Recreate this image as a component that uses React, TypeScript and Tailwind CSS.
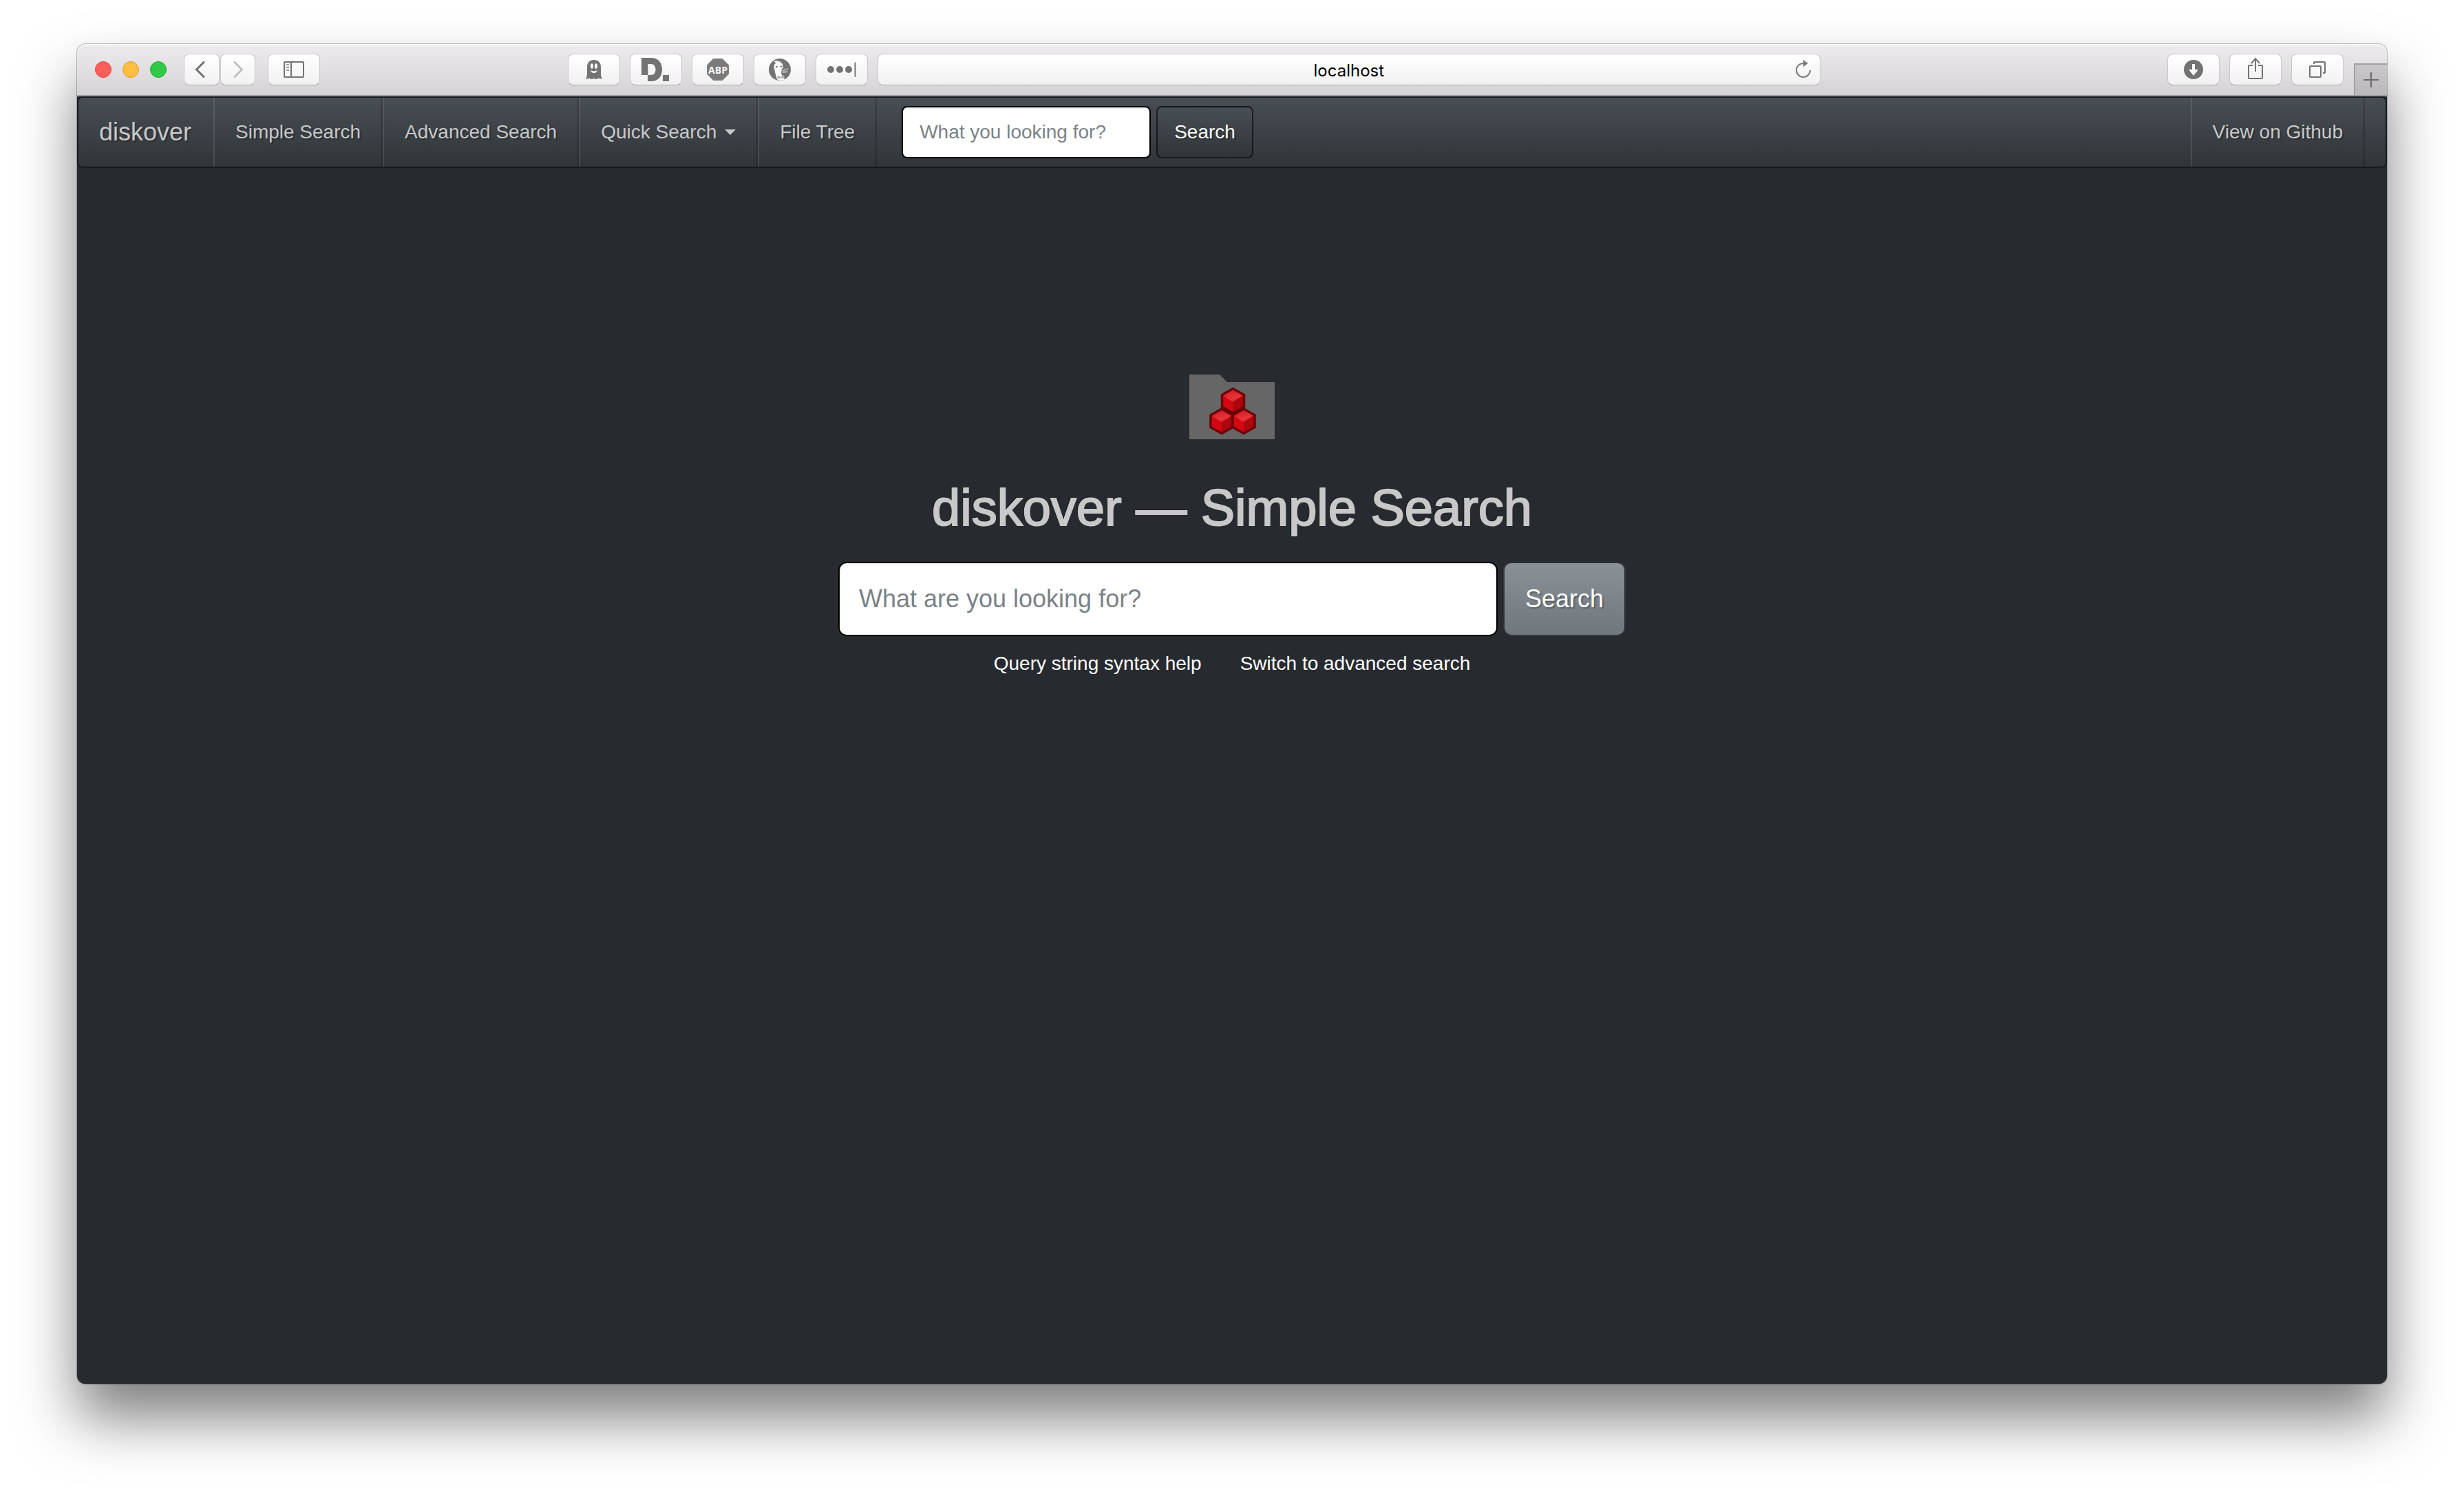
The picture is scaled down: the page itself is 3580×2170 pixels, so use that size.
import React from "react";

const toolButton =
  "flex h-[46px] items-center justify-center rounded-lg border border-[#c9c7ca] border-b-[#a9a7aa] bg-linear-to-b from-white to-[#f1f1f1] text-[#737373]";

const navItem =
  "flex items-center border-l-2 border-l-white/10 border-r-2 border-r-black/20 px-[30px]";

function ToolButton({
  label,
  width = "w-[76px]",
  children,
}: {
  label: string;
  width?: string;
  children: React.ReactNode;
}) {
  return (
    <button type="button" aria-label={label} className={`${toolButton} ${width}`}>
      {children}
    </button>
  );
}

function GhostIcon() {
  return (
    <svg width="24" height="28" viewBox="0 0 24 28" fill="currentColor">
      <path d="M12 0C6 0 2 4 2 10v10c0 3-.5 5-2 7 2 .8 4 .5 5.500-.8C7 28.400 9.500 28.400 12 27c2.500 1.400 5 1.400 6.500-.8 1.500 1.300 3.500 1.600 5.500.8-1.500-2-2-4-2-7V10C22 4 18 0 12 0Z" />
      <ellipse cx="9" cy="9" rx="2" ry="3.800" fill="#fafafa" />
      <ellipse cx="15" cy="9" rx="2" ry="3.800" fill="#fafafa" />
      <path d="M7 14.800c2.500 2.200 7.500 2.200 10 0-.6 2.800-2.500 4.200-5 4.200s-4.400-1.400-5-4.200Z" fill="#fafafa" />
    </svg>
  );
}

function DisconnectIcon() {
  return (
    <svg width="42" height="34" viewBox="0 0 42 34" fill="currentColor">
      <path d="M0 0h14c10.500 0 16 7 16 17s-5.500 17-16 17H9V25h5c4 0 6.500-3 6.500-8S18 9 14 9H9.500v16H0Z" />
      <path d="M31 25h9v9h-9z" />
    </svg>
  );
}

function AbpIcon() {
  return (
    <svg width="32" height="32" viewBox="0 0 32 32">
      <path d="M9.400 0h13.200L32 9.400v13.200L22.600 32H9.400L0 22.600V9.400Z" fill="#7b7b7b" />
      <text
        x="16"
        y="21.500"
        textAnchor="middle"
        fontFamily="'Open Sans', sans-serif"
        fontWeight="700"
        fontSize="14"
        fill="#fafafa"
      >
        ABP
      </text>
    </svg>
  );
}

function DuckIcon() {
  return (
    <svg width="32" height="32" viewBox="0 0 32 32">
      <circle cx="16" cy="16" r="16" fill="#737373" />
      <path d="M7.500 4.500C9 3.500 10.500 3 12 3.500c5 0 8.500 3.500 8.800 9l-2.300 4-.5 4.500 1.500 4 3.500 5.500-6 1.500-5-1.500C10 24 8.500 18 7.500 13c-.5-3 .5-5 3-6.500Z" fill="#fafafa" />
      <circle cx="11.500" cy="12" r="1.300" fill="#737373" />
      <circle cx="18" cy="11.500" r="1.200" fill="#737373" />
      <path d="M18 17.500c3-2.500 7-3 11-3 .5 1.500-3 2.800-6 3.300 2 .5 4 .5 5.500.5-1.500 3-6.500 3.500-10 2.200Z" fill="#a6a6a6" />
      <path d="M12 25l5 1.500 5-2.500 1 5-5-.8-5 2Z" fill="#b5b5b5" />
    </svg>
  );
}

function PasswordIcon() {
  return (
    <svg width="42" height="22" viewBox="0 0 42 22" fill="currentColor">
      <circle cx="5" cy="11" r="5" />
      <circle cx="18" cy="11" r="5" />
      <circle cx="31" cy="11" r="5" />
      <path d="M39.500 0.500h2v21h-2z" />
    </svg>
  );
}

function Logo() {
  const cubes = [
    [63.500, 38],
    [47, 67.500],
    [79, 67.500],
  ];
  return (
    <svg width="124" height="94" viewBox="0 0 124 94" role="img" aria-label="diskover logo">
      <defs>
        <linearGradient id="cube-top" x1="0.300" y1="0" x2="0.700" y2="1">
          <stop offset="0" stopColor="#cf161c" />
          <stop offset="0.700" stopColor="#e8343a" />
          <stop offset="1" stopColor="#cc1c22" />
        </linearGradient>
      </defs>
      <path d="M0 0h44l11 11h69v83H0Z" fill="#666" />
      {cubes.map(([x, y]) => (
        <g key={`${x}-${y}`} transform={`translate(${x} ${y})`}>
          <path d="M0-18 16-9V9.500L0 18.500-16 9.500V-9Z" fill="#d40812" />
          <path d="M0-18 16-9 0 2-16-9Z" fill="url(#cube-top)" />
          <path d="M16-9V9.500L0 18.500V2Z" fill="#ac070f" />
          <path
            d="M0-17.500 16-8.500V9L0 18-16 9V-8.500Z"
            fill="none"
            stroke="#6c0208"
            strokeWidth="3.500"
          />
        </g>
      ))}
    </svg>
  );
}

function TitleBar() {
  return (
    <div className="flex h-[76px] shrink-0 items-center rounded-t-xl border-b-2 border-[#9f9da0] bg-linear-to-b from-[#edebee] to-[#d6d3d7] pl-[26px] shadow-[inset_0_2px_0_#f8f7f8]">
      <div className="flex gap-4">
        <button type="button" aria-label="Close" className="size-6 rounded-full border border-[#e2463f] bg-[#fd5f5b]" />
        <button type="button" aria-label="Minimize" className="size-6 rounded-full border border-[#dfa023] bg-[#febe41]" />
        <button type="button" aria-label="Zoom" className="size-6 rounded-full border border-[#1aab29] bg-[#33c948]" />
      </div>

      <div className="ml-[25px] flex gap-px">
        <ToolButton label="Back" width="w-[52px] pr-1">
          <svg width="16" height="24" viewBox="0 0 16 24" fill="none" stroke="currentColor" strokeWidth="3" strokeLinecap="round">
            <path d="M13 1.500 2.500 12 13 22.500" />
          </svg>
        </ToolButton>
        <ToolButton label="Forward" width="w-[51px]">
          <svg width="16" height="24" viewBox="0 0 16 24" fill="none" stroke="#bfbfbf" strokeWidth="3" strokeLinecap="round">
            <path d="M3 1.500 13.500 12 3 22.500" />
          </svg>
        </ToolButton>
      </div>
      <div className="ml-[18px]">
        <ToolButton label="Show sidebar">
          <svg width="30" height="24" viewBox="0 0 30 24" fill="none" stroke="currentColor" strokeWidth="2">
            <rect x="1" y="1" width="28" height="22" rx="1" />
            <path d="M11 1v22" />
            <path d="M4 5h4M4 9h4M4 13h4" stroke="#999" />
          </svg>
        </ToolButton>
      </div>

      <div className="flex-[359]" />

      <div className="flex gap-[14px] pr-[14px]">
        <ToolButton label="Ghostery"><GhostIcon /></ToolButton>
        <ToolButton label="Disconnect"><DisconnectIcon /></ToolButton>
        <ToolButton label="Adblock Plus"><AbpIcon /></ToolButton>
        <ToolButton label="DuckDuckGo"><DuckIcon /></ToolButton>
        <ToolButton label="Passwords"><PasswordIcon /></ToolButton>
      </div>

      <div className="flex h-[46px] flex-[1316] items-center rounded-lg border border-[#c9c7ca] border-b-[#a9a7aa] bg-linear-to-b from-white to-[#f1f1f1] pl-9 pr-3">
        <input
          aria-label="Address"
          defaultValue="localhost"
          className="min-w-0 flex-1 bg-transparent pt-1 text-center font-[Inter,sans-serif] text-2xl text-black outline-none"
        />
        <button type="button" aria-label="Reload" className="text-[#7d7d7d]">
          <svg width="24" height="28" viewBox="0 0 24 28" fill="none" stroke="currentColor" strokeWidth="2">
            <path d="M22 15a10 10 0 1 1-10-10" />
            <path d="M12 0v10l7-5Z" fill="currentColor" stroke="none" />
          </svg>
        </button>
      </div>

      <div className="flex-[503]" />

      <div className="flex gap-[14px]">
        <ToolButton label="Downloads">
          <svg width="28" height="28" viewBox="0 0 28 28">
            <circle cx="14" cy="14" r="14" fill="#737373" />
            <path d="M12 6h4v8h5l-7 9-7-9h5Z" fill="#fafafa" />
          </svg>
        </ToolButton>
        <ToolButton label="Share">
          <svg width="24" height="32" viewBox="0 0 24 32" fill="none" stroke="currentColor" strokeWidth="2" className="-mt-1">
            <path d="M8 12H2.500a.5.500 0 0 0-.5.500V30a1 1 0 0 0 1 1h18a1 1 0 0 0 1-1V12.500a.5.500 0 0 0-.5-.5H16" />
            <path d="M12 21V2M6 9l6-7 6 7" />
          </svg>
        </ToolButton>
        <ToolButton label="Show tabs">
          <svg width="26" height="26" viewBox="0 0 26 26" fill="none" stroke="currentColor" strokeWidth="2">
            <rect x="2" y="8" width="16" height="16" rx="1" />
            <path d="M8 5V3a1 1 0 0 1 1-1h14a1 1 0 0 1 1 1v14a1 1 0 0 1-1 1h-2" />
          </svg>
        </ToolButton>
      </div>
      <button
        type="button"
        aria-label="New tab"
        className="ml-[15px] flex h-[46px] w-12 items-center justify-center self-end border-l-2 border-t-2 border-[#a3a1a4] bg-linear-to-b from-[#c9c7ca] to-[#bbb8bc] text-[#6b6b6b]"
      >
        <svg width="22" height="22" viewBox="0 0 22 22" stroke="currentColor" strokeWidth="2">
          <path d="M11 0v22M0 11h22" />
        </svg>
      </button>
    </div>
  );
}

function Navbar() {
  return (
    <nav className="flex h-[104px] shrink-0 rounded-lg border-2 border-[#181a1d] bg-[linear-gradient(#484e55,#3a3f44_60%,#313539)] text-[28px] text-[#c8c8c8] [text-shadow:2px_2px_2px_rgba(0,0,0,0.3)]">
      <a href="#home" className="flex w-49 items-center pl-[30px] text-4xl">
        diskover
      </a>
      <a href="#simple" className={navItem}>Simple Search</a>
      <a href="#advanced" className={navItem}>Advanced Search</a>
      <button type="button" aria-haspopup="menu" className={navItem}>
        Quick Search
        <svg width="16" height="8" viewBox="0 0 16 8" fill="currentColor" className="ml-3">
          <path d="M0 0h16L8 8Z" />
        </svg>
      </button>
      <a href="#tree" className={navItem}>File Tree</a>
      <form className="ml-9 flex items-center gap-2" onSubmit={(e) => e.preventDefault()}>
        <input
          type="text"
          aria-label="Quick query"
          placeholder="What you looking for?"
          className="h-19 w-[362px] rounded-lg border-2 border-black bg-white px-6 text-gray-800 shadow-[inset_0_2px_2px_rgba(0,0,0,0.08)] outline-none [text-shadow:none] placeholder:text-[#7a8288]"
        />
        <button
          type="submit"
          className="h-19 rounded-lg border-2 border-black/60 bg-[linear-gradient(#484e55,#3a3f44_60%,#313539)] px-6 text-white [text-shadow:2px_2px_2px_rgba(0,0,0,0.3)]"
        >
          Search
        </button>
      </form>
      <a href="#github" className={`${navItem} ml-auto mr-[30px]`}>View on Github</a>
    </nav>
  );
}

export default function App() {
  return (
    <div className="flex min-h-screen flex-col bg-white px-28 pb-40 pt-16 font-['Liberation_Sans',Arial,sans-serif]">
      <div className="flex flex-1 flex-col rounded-xl bg-[#272b30] shadow-[0_0_0_1px_rgba(0,0,0,0.25),0_50px_84px_rgba(0,0,0,0.5)]">
        <TitleBar />
        <Navbar />
        <main className="flex flex-col items-center pt-75">
          <Logo />
          <h1 className="mt-14 text-[74px] leading-[88px] text-[#c8c8c8] [-webkit-text-stroke:2px_#c8c8c8] [text-shadow:-2px_-2px_0_rgba(0,0,0,0.3)]">
            diskover — Simple Search
          </h1>
          <form className="mt-[34px] flex gap-2" onSubmit={(e) => e.preventDefault()}>
            <input
              type="text"
              aria-label="Search query"
              placeholder="What are you looking for?"
              className="h-27 w-[958px] rounded-xl border-2 border-black bg-white px-7 text-4xl text-gray-800 shadow-[inset_0_2px_2px_rgba(0,0,0,0.08)] outline-none placeholder:text-[#7a8288]"
            />
            <button
              type="submit"
              className="h-27 rounded-xl border-2 border-black/60 bg-[linear-gradient(#8a9196,#7a8288_60%,#70787d)] px-[30px] text-4xl text-white [text-shadow:2px_2px_2px_rgba(0,0,0,0.3)]"
            >
              Search
            </button>
          </form>
          <div className="mt-5 flex gap-14 text-[28px] leading-10 text-white">
            <a href="#help">Query string syntax help</a>
            <a href="#advanced">Switch to advanced search</a>
          </div>
        </main>
      </div>
    </div>
  );
}
